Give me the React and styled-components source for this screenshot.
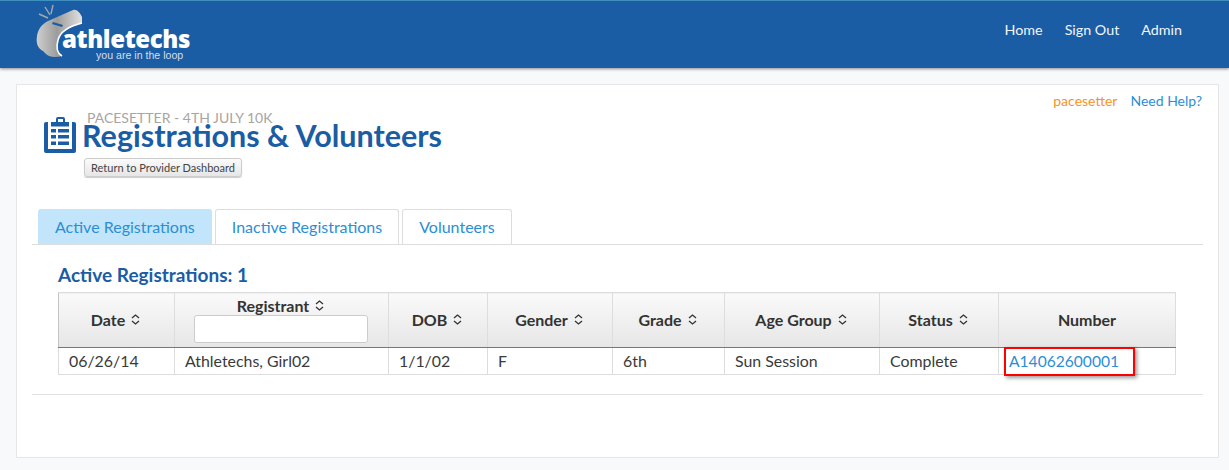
import styled, { createGlobalStyle } from "styled-components";

const GlobalStyle = createGlobalStyle`
  html, body {
    margin: 0;
    padding: 0;
    background: #f8f9fb;
    font-family: Lato, "Open Sans", sans-serif;
    color: #333;
  }
`;

const Page = styled.div`
  width: 1229px;
  height: 470px;
  overflow: hidden;
`;

const Header = styled.header`
  height: 67px;
  background: #1a5da4;
  border-top: 1px solid #3f8fc0;
  box-shadow: 0 1px 3px rgba(0, 0, 0, 0.45);
  display: flex;
  justify-content: space-between;
  align-items: flex-start;
  padding: 0 47px 0 35px;
`;

const Logo = styled.div`
  width: 160px;
  height: 62px;
  margin-top: 3px;
  display: flex;
  position: relative;
`;

const LogoName = styled.span`
  position: absolute;
  left: 27px;
  top: 24px;
  font-family: "Open Sans", sans-serif;
  font-size: 24px;
  line-height: 22px;
  font-weight: 800;
  letter-spacing: -0.4px;
  color: #fff;
`;

const LogoTag = styled.span`
  position: absolute;
  left: 61px;
  top: 46px;
  font-family: "Liberation Sans", sans-serif;
  font-size: 10.6px;
  line-height: 11px;
  color: #d5dfec;
`;

const Nav = styled.nav`
  display: flex;
  gap: 22px;
  padding-top: 20px;
`;

const NavLink = styled.a`
  color: #f2f5f9;
  font-size: 14.3px;
  line-height: 18px;
`;

const Card = styled.main`
  margin: 16px 10px 0 16px;
  height: 365px;
  background: #fff;
  border: 1px solid #e6e6e6;
  padding: 7px 15px 0 15px;
`;

const TopLinks = styled.div`
  display: flex;
  justify-content: flex-end;
  gap: 13px;
  padding-right: 1px;
  font-size: 14px;
  line-height: 18px;
`;

const UserName = styled.span`
  color: #f7931e;
`;

const HelpLink = styled.a`
  color: #2a8fd6;
`;

const TitleBlock = styled.div`
  display: flex;
  align-items: flex-start;
  margin: 0 0 0 12px;
`;

const ClipIcon = styled.svg`
  width: 33px;
  height: 36px;
  margin-top: 7px;
  flex: none;
`;

const TitleText = styled.div`
  margin-left: 5px;
`;

const EventName = styled.div`
  font-size: 14px;
  line-height: 16px;
  margin-left: 5px;
  color: #a8a5a2;
`;

const Title = styled.h1`
  margin: -10px 0 0;
  font-size: 30.5px;
  line-height: 38px;
  font-weight: 700;
  color: #1a5da4;
`;

const BackButton = styled.button`
  display: block;
  margin: 4px 0 0 2px;
  height: 19px;
  padding: 0 6px;
  font-family: Lato, sans-serif;
  font-size: 11px;
  color: #444;
  background: linear-gradient(#fbfbfb, #e6e6e6);
  border: 1px solid #ccc;
  border-radius: 3px;
  box-shadow: 0 1px 1px rgba(0, 0, 0, 0.2);
`;

const Tabs = styled.div`
  display: flex;
  gap: 3px;
  margin-top: 32px;
  padding-left: 6px;
  border-bottom: 1px solid #ddd;
`;

const Tab = styled.a`
  height: 34px;
  line-height: 33px;
  padding: 0 16px;
  font-size: 16px;
  border: 1px solid ${(p) => (p.$active ? "#c2e5fb" : "#ddd")};
  border-bottom: 0;
  border-radius: 3px 3px 0 0;
  background: ${(p) => (p.$active ? "#c2e5fb" : "#fff")};
  color: #2a8fd6;
`;

const Section = styled.section`
  padding: 19px 26px 0;
`;

const SectionTitle = styled.h2`
  margin: 0 0 6px;
  font-size: 19px;
  line-height: 22px;
  font-weight: 700;
  color: #1a5da4;
`;

const Table = styled.table`
  border-collapse: collapse;
  table-layout: fixed;
  width: 1117px;
  font-size: 15.9px;
`;

const Th = styled.th`
  height: 55px;
  padding: 0 ${(p) => (p.$plain ? 0 : 2)}px 2px 0;
  box-sizing: border-box;
  border: 1px solid #ddd;
  border-left-color: #c4c4c4;
  border-bottom: 1px solid #777;
  background: linear-gradient(#fafafa, #e6e6e6);
  font-weight: 700;
  font-size: 16px;
  color: #333;
  vertical-align: middle;
`;

const HeadLabel = styled.span`
  display: inline-flex;
  align-items: center;
  gap: 6px;
  line-height: 18px;
`;

const SortIcon = styled.svg`
  width: 9px;
  height: 11px;
`;

const FilterInput = styled.input`
  display: block;
  box-sizing: border-box;
  width: 174px;
  height: 28px;
  margin: 0 auto;
  background: #fff;
  border: 1px solid #ccc;
  border-radius: 3px;
`;

const Td = styled.td`
  height: 26px;
  padding: 0 10px;
  border: 1px solid #ddd;
  color: #3a3a3a;
  line-height: 18px;
`;

const NumberCell = styled(Td)`
  position: relative;
`;

const NumberLink = styled.a`
  color: #2a8fd6;
  font-size: 15.6px;
`;

const Callout = styled.div`
  position: absolute;
  left: 5px;
  top: -1px;
  width: 127px;
  height: 25px;
  border: 2px solid #f00;
  box-shadow: 2px 2px 4px rgba(0, 0, 0, 0.4);
`;

const Rule = styled.hr`
  margin: 19px 0 0;
  border: 0;
  border-top: 1px solid #e2e2e2;
`;

const Sort = () => (
  <SortIcon viewBox="0 0 9 11">
    <path d="M1 4 L4.5 1 L8 4 M1 7 L4.5 10 L8 7" fill="none" stroke="#333" strokeWidth="1.3" />
  </SortIcon>
);

const columns = [
  { label: "Date", width: 116 },
  { label: "Registrant", width: 214, filter: true },
  { label: "DOB", width: 99 },
  { label: "Gender", width: 125 },
  { label: "Grade", width: 112 },
  { label: "Age Group", width: 155 },
  { label: "Status", width: 119 },
  { label: "Number", width: 177, plain: true },
];

const App = () => (
  <Page>
    <GlobalStyle />
    <Header>
      <Logo>
        <svg width="60" height="60" viewBox="0 0 60 60">
          <defs>
            <linearGradient id="whistle" x1="0" y1="0" x2="1" y2="0">
              <stop offset="0" stopColor="#cfcfcf" />
              <stop offset="0.45" stopColor="#9c9c9c" />
              <stop offset="1" stopColor="#e2e2e2" />
            </linearGradient>
          </defs>
          <path
            d="M13 17 L38 6 C42 5 45 9 47 13 L47 19 C35 22 25 28 23 36 C21 43 22 49 27 52 C20 54 14 53 11 50 L8 47 C2 44 1 38 2 32 C3 25 7 20 13 17 Z"
            fill="url(#whistle)"
          />
          <path d="M47 19 C35 22 25 28 23 36 C21 43 22 49 27 52" fill="none" stroke="#fff" strokeWidth="1.6" />
          <path d="M18 18 L28 21 L27 23 L17 20 Z" fill="#1a5da4" />
          <path d="M4 10 L13 14 M10 3 L15 11 M18 1 L16 10" stroke="#a9a9a9" strokeWidth="1.4" />
        </svg>
        <LogoName>athletechs</LogoName>
        <LogoTag>you are in the loop</LogoTag>
      </Logo>
      <Nav>
        <NavLink>Home</NavLink>
        <NavLink>Sign Out</NavLink>
        <NavLink>Admin</NavLink>
      </Nav>
    </Header>
    <Card>
      <TopLinks>
        <UserName>pacesetter</UserName>
        <HelpLink>Need Help?</HelpLink>
      </TopLinks>
      <TitleBlock>
        <ClipIcon viewBox="0 0 33 36">
          <path
            fill="#1a5da4"
            d="M2 5 H4 V32 H28 V5 H30 Q32 5 32 7 V34 Q32 36 30 36 H2 Q0 36 0 34 V7 Q0 5 2 5 Z M12 5 V2 Q12 0 14 0 H19 Q21 0 21 2 V5 H19 V2 H14 V5 Z M7 5 H25 V9.500 H7 Z M7 12 H12 V15.500 H7 Z M14 12 H25 V15.500 H14 Z M7 18 H12 V21.500 H7 Z M14 18 H25 V21.500 H14 Z M7 24.500 H12 V28 H7 Z M14 24.500 H25 V28 H14 Z"
          />
        </ClipIcon>
        <TitleText>
          <EventName>PACESETTER - 4TH JULY 10K</EventName>
          <Title>Registrations &amp; Volunteers</Title>
          <BackButton>Return to Provider Dashboard</BackButton>
        </TitleText>
      </TitleBlock>
      <Tabs>
        <Tab $active>Active Registrations</Tab>
        <Tab>Inactive Registrations</Tab>
        <Tab>Volunteers</Tab>
      </Tabs>
      <Section>
        <SectionTitle>Active Registrations: 1</SectionTitle>
        <Table>
          <colgroup>
            {columns.map((c) => (
              <col key={c.label} width={c.width} />
            ))}
          </colgroup>
          <thead>
            <tr>
              {columns.map((c) => (
                <Th key={c.label} $plain={c.plain}>
                  <HeadLabel>
                    {c.label}
                    {!c.plain && <Sort />}
                  </HeadLabel>
                  {c.filter && <FilterInput />}
                </Th>
              ))}
            </tr>
          </thead>
          <tbody>
            <tr>
              <Td>06/26/14</Td>
              <Td>Athletechs, Girl02</Td>
              <Td>1/1/02</Td>
              <Td>F</Td>
              <Td>6th</Td>
              <Td>Sun Session</Td>
              <Td>Complete</Td>
              <NumberCell>
                <NumberLink>A14062600001</NumberLink>
                <Callout />
              </NumberCell>
            </tr>
          </tbody>
        </Table>
      </Section>
      <Rule />
    </Card>
  </Page>
);

export default App;
